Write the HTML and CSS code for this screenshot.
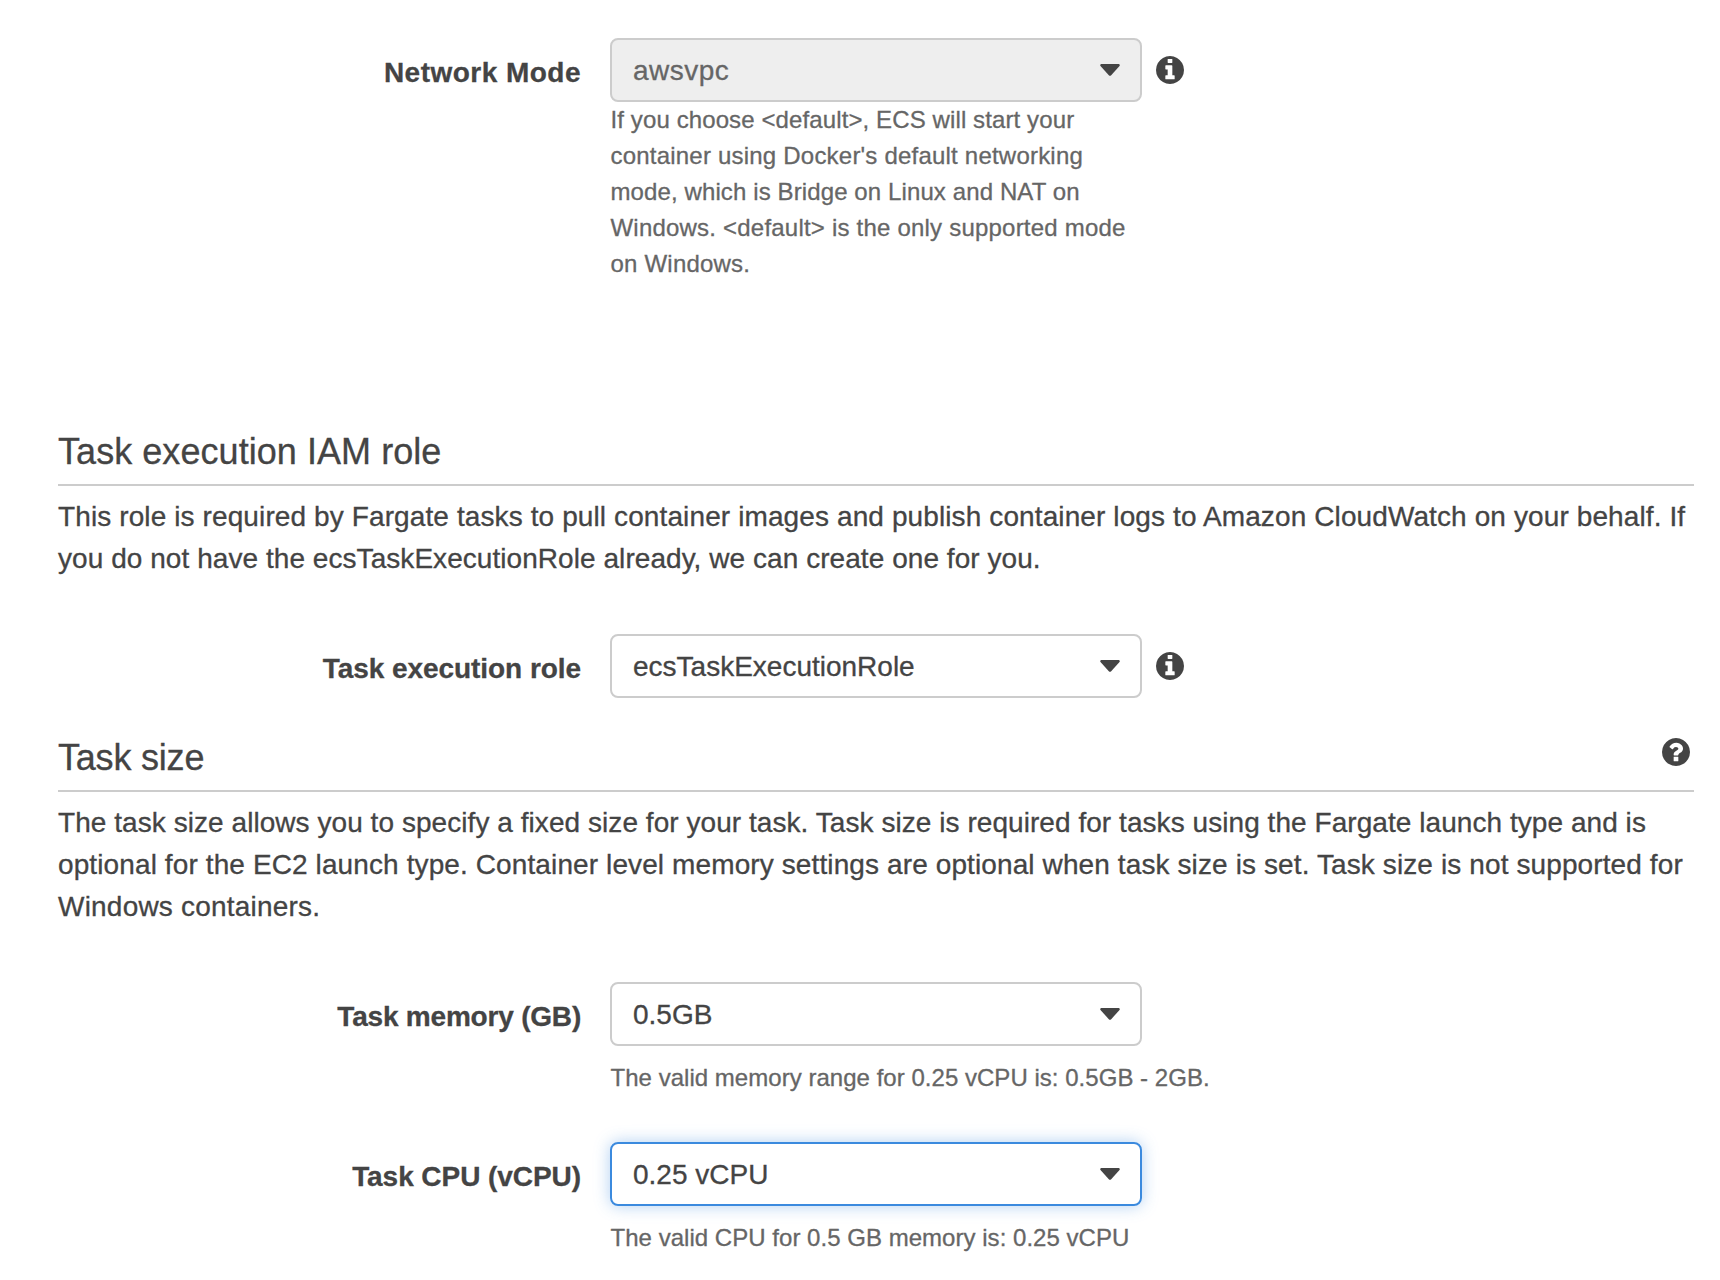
FILE: index.html
```html
<!DOCTYPE html>
<html lang="en">
<head>
<meta charset="utf-8">
<title>Task definition</title>
<link rel="stylesheet" href="styles.css">
</head>
<body>
<svg class="defs" width="0" height="0" aria-hidden="true">
  <symbol id="info" viewBox="0 128 1536 1536"><path d="M1024 1376v-160q0-14-9-23t-23-9h-96v-512q0-14-9-23t-23-9h-320q-14 0-23 9t-9 23v160q0 14 9 23t23 9h96v320h-96q-14 0-23 9t-9 23v160q0 14 9 23t23 9h448q14 0 23-9t9-23zm-128-896v-160q0-14-9-23t-23-9h-192q-14 0-23 9t-9 23v160q0 14 9 23t23 9h192q14 0 23-9t9-23zm640 416q0 209-103 385.5t-279.5 279.5-385.5 103-385.5-103-279.5-279.5-103-385.5 103-385.5 279.5-279.5 385.5-103 385.5 103 279.5 279.5 103 385.5z"/></symbol>
  <symbol id="question" viewBox="0 128 1536 1536"><path d="M896 1376v-192q0-14-9-23t-23-9h-192q-14 0-23 9t-9 23v192q0 14 9 23t23 9h192q14 0 23-9t9-23zm256-672q0-88-55.500-163t-138.500-116-170-41q-243 0-371 213-15 24 8 42l132 100q7 6 19 6 16 0 25-12 53-68 86-92 34-24 86-24 48 0 85.500 26t37.500 59q0 38-20 61t-68 45q-63 28-115.500 86.500t-52.500 125.500v36q0 14 9 23t23 9h192q14 0 23-9t9-23q0-19 21.500-49.500t54.500-49.500q32-18 49-28.500t46-35 44.500-48 28-60.500 12.500-81zm384 192q0 209-103 385.500t-279.500 279.500-385.500 103-385.500-103-279.500-279.500-103-385.500 103-385.500 279.500-279.500 385.500-103 385.500 103 279.500 279.500 103 385.500z"/></symbol>
  <symbol id="caret" viewBox="0 0 20 12"><path d="M1.200 0h17.600q1.600.5.700 2L11.200 11.200q-1.200 1-2.400 0L.5 2Q-.4.500 1.200 0z"/></symbol>
</svg>
<main class="page">
  <div class="row">
    <label class="label track-xl">Network Mode</label>
    <div class="field">
      <div class="control">
        <div class="select disabled"><span class="track-xl">awsvpc</span><svg class="caret"><use href="#caret"/></svg></div>
        <svg class="icon"><use href="#info"/></svg>
      </div>
      <p class="help"><span class="track-m">If you choose &lt;default&gt;, ECS will start your</span><br><span class="track-l">container using Docker's default networking</span><br><span class="track-m">mode, which is Bridge on Linux and NAT on</span><br><span class="track-l">Windows. &lt;default&gt; is the only supported mode</span><br><span class="track-l">on Windows.</span></p>
    </div>
  </div>

  <section class="section role">
    <header class="head"><h2 class="track-s">Task execution IAM role</h2></header>
    <p class="text"><span class="track-m">This role is required by Fargate tasks to pull container images and publish container logs to Amazon CloudWatch on your behalf. If</span><br><span class="track-s">you do not have the ecsTaskExecutionRole already, we can create one for you.</span></p>
    <div class="row">
      <label class="label tight-s">Task execution role</label>
      <div class="field">
        <div class="control">
          <div class="select"><span>ecsTaskExecutionRole</span><svg class="caret"><use href="#caret"/></svg></div>
          <svg class="icon"><use href="#info"/></svg>
        </div>
      </div>
    </div>
  </section>

  <section class="section size">
    <header class="head"><h2 class="tight-l">Task size</h2><svg class="icon"><use href="#question"/></svg></header>
    <p class="text"><span class="track-s">The task size allows you to specify a fixed size for your task. Task size is required for tasks using the Fargate launch type and is</span><br><span class="track-m">optional for the EC2 launch type. Container level memory settings are optional when task size is set. Task size is not supported for</span><br><span class="track-l">Windows containers.</span></p>
    <div class="row">
      <label class="label tight-l">Task memory (GB)</label>
      <div class="field">
        <div class="control"><div class="select"><span>0.5GB</span><svg class="caret"><use href="#caret"/></svg></div></div>
        <p class="help spaced">The valid memory range for 0.25 vCPU is: 0.5GB - 2GB.</p>
      </div>
    </div>
    <div class="row next">
      <label class="label tight-s">Task CPU (vCPU)</label>
      <div class="field">
        <div class="control"><div class="select focused"><span>0.25 vCPU</span><svg class="caret"><use href="#caret"/></svg></div></div>
        <p class="help spaced">The valid CPU for 0.5 GB memory is: 0.25 vCPU</p>
      </div>
    </div>
  </section>
</main>
</body>
</html>
```
FILE: styles.css
```css
* { box-sizing: border-box; }
body {
  margin: 0;
  background: #fff;
  color: #444;
  font: 28px/42px "Liberation Sans", Arial, sans-serif;
  -webkit-text-stroke: .3px currentColor;
}
.defs { display: block; }
.page { height: 1280px; padding: 38px 26px 0 58px; overflow: hidden; }
h2, p { margin: 0; font-weight: 400; white-space: nowrap; }
svg { fill: #444; flex: none; }

.row { display: flex; gap: 29px; }
.label {
  width: 523px;
  padding-top: 14px;
  text-align: right;
  font-weight: 700;
  white-space: nowrap;
}
.control { display: flex; align-items: center; gap: 14px; }
.select {
  display: flex;
  justify-content: space-between;
  width: 532px;
  height: 64px;
  padding: 10px 20px 0 21px;
  border: 2px solid #ccc;
  border-radius: 8px;
}
.disabled { background: #eee; color: #666; }
.focused { border-color: #3b8ade; box-shadow: 0 0 16px rgba(59, 138, 222, .4); }
.caret { width: 20px; height: 12px; margin-top: 14px; }
.icon { width: 28px; height: 28px; }
.help { padding-left: .5px; color: #666; font-size: 24px; line-height: 36px; letter-spacing: .03px; }
.spaced { margin-top: 14px; }

.head {
  display: flex;
  justify-content: space-between;
  height: 60px;
  border-bottom: 2px solid #ccc;
}
.head h2 { font-size: 36px; line-height: 52px; }
.head .icon { margin: 6px 4px 0 0; }
.text { padding-top: 10px; }
.role { margin-top: 144px; }
.role .row { margin-top: 54px; }
.size { margin-top: 34px; }
.size .row { margin-top: 54px; }
.size .next { margin-top: 46px; }

/* letter-spacing steps */
.track-s { letter-spacing: .055px; }
.track-m { letter-spacing: .11px; }
.track-l { letter-spacing: .21px; }
.track-xl { letter-spacing: .48px; }
.tight-s { letter-spacing: -.06px; }
.tight-l { letter-spacing: -.2px; }
```
